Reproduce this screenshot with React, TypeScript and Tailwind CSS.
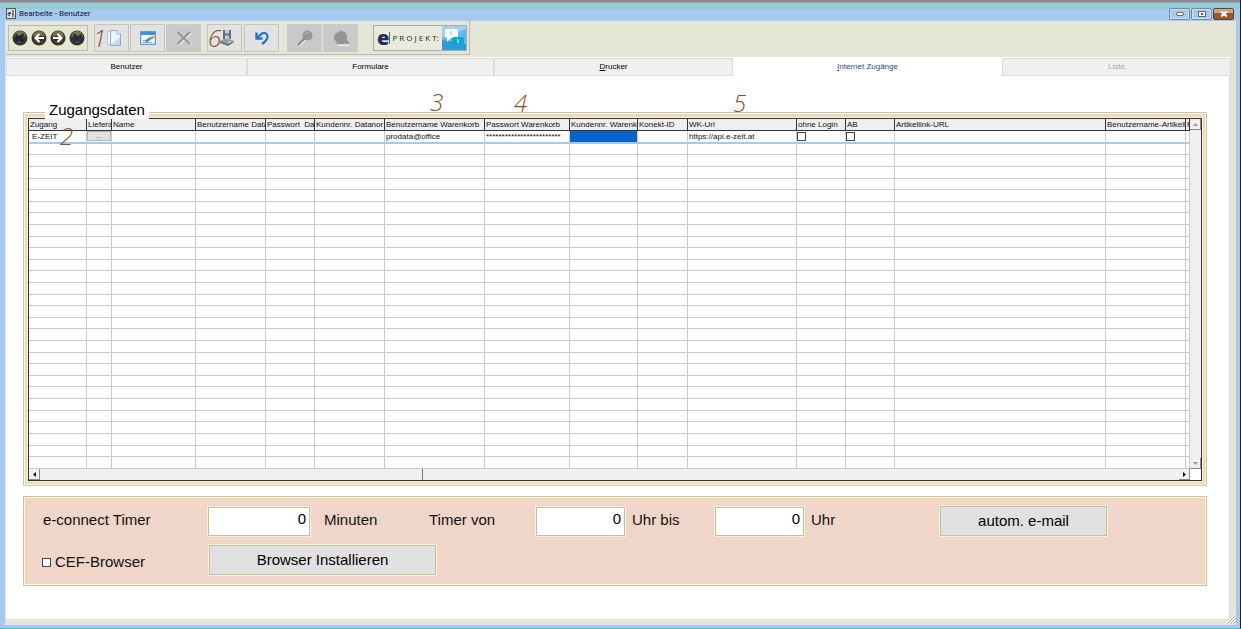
import { useState } from 'react';
import type { ReactNode } from 'react';

type Column = { label: string; width: string };

const TABS = [
  { label: 'Benutzer', grow: 'grow-[240]' },
  { label: 'Formulare', grow: 'grow-[246]' },
  { label: 'Drucker', grow: 'grow-[238]', hotkey: true },
  { label: 'Internet Zugänge', grow: 'grow-[270]', hotkey: true },
  { label: 'Liste', grow: 'grow-[228]', disabled: true },
];

// The URL column has no width, it takes what is left
const COLUMNS: Column[] = [
  { label: 'Zugang', width: 'w-[58px]' },
  { label: 'Liefera', width: 'w-[25px]' },
  { label: 'Name', width: 'w-[84px]' },
  { label: 'Benutzername Data', width: 'w-[70px]' },
  { label: 'Passwort  Da', width: 'w-[49px]' },
  { label: 'Kundennr. Datanor', width: 'w-[70px]' },
  { label: 'Benutzername Warenkorb', width: 'w-[100px]' },
  { label: 'Passwort Warenkorb', width: 'w-[85px]' },
  { label: 'Kundennr. Warenk', width: 'w-[68px]' },
  { label: 'Konekt-ID', width: 'w-[50px]' },
  { label: 'WK-Url', width: 'w-[109px]' },
  { label: 'ohne Login', width: 'w-[49px]' },
  { label: 'AB', width: 'w-[49px]' },
  { label: 'Artikellink-URL', width: '' },
  { label: 'Benutzername-Artikelli', width: 'w-[80px]' },
  { label: 'P', width: 'w-[4px]' },
];

const EMPTY_ROWS = 28;

function NavButton({ label, children }: { label: string; children: ReactNode }) {
  return (
    <button aria-label={label} className="h-4 w-4">
      <svg viewBox="0 0 16 16" className="h-4 w-4">
        <circle cx="8" cy="8" r="7.5" fill="#34342a" />
        <path d="M2 7a6 6 0 0 1 12 0c-3-2-9-2-12 0Z" fill="#77754a" />
        <path d="M2.500 10a6 5 0 0 0 11 0c-3 2-8 2-11 0Z" fill="#55532e" />
        {children}
      </svg>
    </button>
  );
}

function ToolButton({ label, off, children }: { label: string; off?: boolean; children: ReactNode }) {
  return (
    <button
      aria-label={label}
      disabled={off}
      className={`flex h-7 w-[35px] items-center justify-center border ${
        off ? 'border-[#cccccc] bg-[#c9c9c9]' : 'border-[#c3c3c8] bg-[#e2e2e2]'
      }`}
    >
      {children}
    </button>
  );
}

// Handwritten step number lying over the window
function Mark({ digit, place }: { digit: string; place: string }) {
  return (
    <span
      className={`pointer-events-none absolute z-10 font-['Open_Sans',sans-serif] text-2xl leading-6 font-light text-[#8a4f1c] italic ${place}`}
    >
      {digit}
    </span>
  );
}

function TitleBar() {
  return (
    <header className="flex h-[21px] items-end border-t-2 border-[#888888] bg-[#a5c9f1]">
      <div className="flex h-[19px] flex-1 items-center border-t border-[#8c9ed6] bg-linear-to-b from-[#98cccc] from-35% to-[#a5c9f1] to-35% pt-[3px] pr-1.5 pl-1.5">
        <svg viewBox="0 0 10 11" className="h-[11px] w-[10px]">
          <rect x="0.500" y="0.500" width="9" height="10" fill="#dcdcdc" stroke="#555" />
          <path d="M2 5.500h3a1.500 1.500 0 1 0-1 2M7 2v7" stroke="#333" fill="none" />
        </svg>
        <h1 className="pl-[3px] font-[Roboto,sans-serif] text-[8px] leading-3 whitespace-nowrap text-[#10182c]">
          Bearbeite - Benutzer
        </h1>
        <div className="ml-auto flex gap-px">
          <button
            aria-label="Minimieren"
            className="flex h-3 w-[21px] items-center justify-center rounded-xs border border-[#6f89ad] bg-[#a9cbe8] shadow-[inset_0_0_0_1px_#cfe2f5]"
          >
            <span className="h-[4px] w-2 rounded-xs border border-[#666666] bg-white" />
          </button>
          <button
            aria-label="Maximieren"
            className="flex h-3 w-[21px] items-center justify-center rounded-xs border border-[#6f89ad] bg-[#a9cbe8] shadow-[inset_0_0_0_1px_#cfe2f5]"
          >
            <svg viewBox="0 0 8 6" className="h-[6px] w-2">
              <rect x="0.500" y="0.500" width="7" height="5" fill="#fff" stroke="#666" />
              <rect x="3" y="2" width="2" height="2" fill="#555" />
            </svg>
          </button>
          <button
            aria-label="Schließen"
            className="flex h-3 w-[21px] items-center justify-center rounded-xs border border-[#5b4536] bg-linear-to-b from-[#c9a98a] from-45% to-[#9a5a26] to-45%"
          >
            <svg viewBox="0 0 8 6" className="h-[6px] w-2">
              <path d="M1 0.500l6 5M7 0.500l-6 5" stroke="#fff" strokeWidth="2" />
            </svg>
          </button>
        </div>
      </div>
    </header>
  );
}

function Toolbar() {
  return (
    <div className="flex h-[36px]">
      <div className="flex h-[34px] items-center border-r border-b border-[#b9b9c0] pr-0.5 pl-0.5">
        <div className="flex h-[26px] w-20 items-center justify-center gap-[3px] border border-[#b8b8b4]">
          <NavButton label="Erster">
            <path d="M4.500 4v8M11.500 4l-4.500 4 4.500 4" stroke="#16203c" strokeWidth="2" fill="none" />
          </NavButton>
          <NavButton label="Zurück">
            <path d="M8.500 4l-4 4 4 4M5 8h8" stroke="#fff" strokeWidth="2.200" fill="none" />
          </NavButton>
          <NavButton label="Weiter">
            <path d="M7.500 4l4 4-4 4M3 8h8" stroke="#fff" strokeWidth="2.200" fill="none" />
          </NavButton>
          <NavButton label="Letzter">
            <path d="M4.500 4l4.500 4-4.500 4M11.500 4v8" stroke="#1b2b58" strokeWidth="2" fill="none" />
          </NavButton>
        </div>

        <div className="ml-1.5 flex gap-px">
          <ToolButton label="Neu">
            <svg viewBox="0 0 14 18" className="ml-1 h-[18px] w-3.5">
              <path d="M0.500 2.500h7v13h-7z" fill="#f4f8fc" stroke="#b4c6da" />
              <path d="M3.500 1.500h6.500l3.500 3.500v11.500h-10z" fill="#eef4fb" stroke="#8fa9c8" />
              <path d="M10 1.500v3.500h3.500" fill="#fff" stroke="#8fa9c8" />
              <path d="M4 16l9-8v8z" fill="#c5d9ee" />
            </svg>
          </ToolButton>
          <ToolButton label="Bearbeiten">
            <svg viewBox="0 0 16 14" className="h-[14px] w-4">
              <rect x="0.700" y="0.700" width="14.600" height="12.600" fill="#f5f9fd" stroke="#3a87cc" />
              <path d="M1 1h14v3H1z" fill="#3f92da" />
              <path d="M3 9.500h3M3 11.500h9" stroke="#8aa6c4" />
              <path d="M5 11l1-2.500 5-3 1.500 2-5 3.500z" fill="#5f88b8" />
              <path d="M11 6l3-1.500 1 2-3 1.500z" fill="#d99a3c" />
            </svg>
          </ToolButton>
          <ToolButton label="Löschen" off>
            <svg viewBox="0 0 16 16" className="h-4 w-4">
              <path d="M2.500 2.500l13 12M15 3L3 15" stroke="#f0f0f0" strokeWidth="1.500" />
              <path d="M1.500 2l12.500 12M14 2l-12.500 12" stroke="#969696" strokeWidth="2.200" />
            </svg>
          </ToolButton>
        </div>

        <div className="ml-1.5 flex gap-0.5">
          <ToolButton label="Speichern">
            <svg viewBox="0 0 16 16" className="ml-1 h-4 w-4">
              <path d="M1 11l6-3 8 3-6 4z" fill="#9a9c9e" />
              <path d="M1 11v2l8 3v-2zM9 14v2l6-4v-1z" fill="#6d7072" />
              <path d="M4 0h8v9H4z" fill="#c4ccd4" />
              <path d="M5 0v9M11 0v9" stroke="#5f6e7c" strokeWidth="2" />
              <path d="M6 4.500h4" stroke="#5f6e7c" strokeWidth="2" />
              <path d="M9 12.500l3-1" stroke="#e8e8e8" />
            </svg>
          </ToolButton>
          <ToolButton label="Rückgängig">
            <svg viewBox="0 0 14 14" className="h-[14px] w-[14px]">
              <path d="M1.500 1.500v6h6" stroke="#1f74cf" strokeWidth="2.400" fill="none" />
              <path d="M2 7l5-4.500c3-1.500 6 .5 5.500 3.500C12 9 9.500 11.500 7 13" stroke="#1f74cf" strokeWidth="2.200" fill="none" />
            </svg>
          </ToolButton>
        </div>

        <div className="ml-2 flex gap-px">
          <ToolButton label="Suchen" off>
            <svg viewBox="0 0 16 16" className="h-4 w-4">
              <path d="M2.500 15.500l6-6" stroke="#efefef" strokeWidth="2" />
              <circle cx="10.500" cy="5.500" r="5" fill="#979797" />
              <path d="M7.500 8.500l-6.500 6.500" stroke="#8e8e8e" strokeWidth="2.400" />
              <path d="M8 4.500a3 3 0 0 1 4-1.500" stroke="#bdbdbd" fill="none" />
            </svg>
          </ToolButton>
          <ToolButton label="Filter" off>
            <svg viewBox="0 0 18 16" className="h-4 w-[18px]">
              <path d="M6 15h10l2-2-1 3H6z" fill="#f2f2f2" />
              <path d="M8 0l1 1 4 1 2 3v5l2 2v2h-2l-2-1-2 1H5l-1-3-2-1V6l2-3 3-1z" fill="#949494" />
            </svg>
          </ToolButton>
        </div>

        <button aria-label="e-Projekt" className="ml-[15px] flex h-[26px] items-center border border-[#aaaab0] bg-[#e9e9dc] pl-[3px]">
          <span className="font-['Open_Sans',sans-serif] text-xl leading-5 font-extrabold text-[#232b62]">e</span>
          <span className="h-3 w-px bg-[#2f7a6c]" />
          <span className="pl-0.5 font-['Open_Sans',sans-serif] text-[8px] leading-3 whitespace-nowrap text-[#22252e]">
            P R O J E K T:
          </span>
          <svg viewBox="0 0 24 24" className="ml-[3px] h-6 w-6">
            <rect width="24" height="24" fill="#64b8ea" />
            <path d="M0 14l24 4v6H0z" fill="#2b9bdc" />
            <path d="M0 0h24v3L0 12z" fill="#9dd4f4" />
            <path d="M5 3h9a2 2 0 0 1 2 2v5a2 2 0 0 1-2 2H9l-4 4v-4a2 2 0 0 1-2-2V5a2 2 0 0 1 2-2Z" fill="#fff" />
            <path d="M12 11h8a2 2 0 0 1 2 2v4a2 2 0 0 1-2 2v3l-3-3h-5a2 2 0 0 1-2-2v-4a2 2 0 0 1 2-2Z" fill="#0fa7cf" />
            <path d="M9 5v4M16 13v4" stroke="#9fd8f2" strokeWidth="1.500" />
          </svg>
        </button>
      </div>
    </div>
  );
}

function AccessTable() {
  const [noLogin, setNoLogin] = useState(false);
  const [ab, setAb] = useState(false);

  const cell = 'overflow-hidden border-r border-b-2 border-r-[#cbcbcb] border-b-[#a5c9f1] p-0 whitespace-nowrap';
  const box = 'block h-[9px] w-[9px] appearance-none border border-[#444444] bg-white checked:bg-[#333333]';

  return (
    <table className="h-full w-full table-fixed border-separate border-spacing-0 text-[8px] leading-[9px] text-[#111111]">
      <thead>
        <tr className="h-3">
          {COLUMNS.map((c) => (
            <th
              key={c.label}
              className={`overflow-hidden border-r border-b border-[#333333] bg-[#f0eff0] p-0 pl-px text-left font-normal whitespace-pre ${c.width}`}
            >
              {c.label}
            </th>
          ))}
        </tr>
      </thead>
      <tbody>
        <tr className="h-3">
          <td className={`${cell} pl-[3px]`}>E-ZEIT</td>
          <td className={cell}>
            <button
              aria-label="Lieferant wählen"
              className="block h-[10px] w-full border border-[#b4b4b4] bg-[#e1e1e1] text-center leading-[6px] text-[#777777]"
            >
              ...
            </button>
          </td>
          <td className={cell} />
          <td className={cell} />
          <td className={cell} />
          <td className={cell} />
          <td className={`${cell} pl-px`}>prodata@office</td>
          <td className={`${cell} pl-px`}>************************</td>
          <td className={`${cell} bg-[#0564cc]`} />
          <td className={cell} />
          <td className={`${cell} pl-px`}>https://api.e-zeit.at</td>
          <td className={cell}>
            <input type="checkbox" aria-label="ohne Login" checked={noLogin} onChange={(e) => setNoLogin(e.target.checked)} className={box} />
          </td>
          <td className={cell}>
            <input type="checkbox" aria-label="AB" checked={ab} onChange={(e) => setAb(e.target.checked)} className={box} />
          </td>
          <td className={cell} />
          <td className={cell} />
          <td className={cell} />
        </tr>
        {Array.from({ length: EMPTY_ROWS }, (_, row) => (
          <tr key={row} className="h-[11px]">
            {COLUMNS.map((c) => (
              <td key={c.label} className="border-r border-b border-[#cbcbcb] p-0" />
            ))}
          </tr>
        ))}
      </tbody>
    </table>
  );
}

function ScrollArrow({ label, d, dim }: { label: string; d: string; dim?: boolean }) {
  return (
    <button
      aria-label={label}
      className="flex h-[11px] w-[11px] shrink-0 items-center justify-center border-r border-b border-[#8a8a8a] bg-[#f0f0f0]"
    >
      <svg viewBox="0 0 5 5" className="h-[5px] w-[5px]">
        <path d={d} fill={dim ? '#9a9a9a' : '#111'} />
      </svg>
    </button>
  );
}

function AccessPanel() {
  return (
    <section className="relative flex min-h-0 flex-1 border border-[#c4c4c4] bg-[#fdf7c4] p-px">
      <h2 className="absolute -top-3 left-[21px] bg-white px-1 font-['Liberation_Sans',sans-serif] text-[15px] leading-[18px] text-black">
        Zugangsdaten
      </h2>
      <div className="flex min-h-0 flex-1 bg-[#f0d6c8] px-[3px] pt-1 pb-[3px]">
        <div className="flex min-h-0 flex-1 border border-[#333333] bg-white shadow-[0_0_0_1px_#fdf7c4]">
          <div className="flex min-h-0 min-w-0 flex-1 flex-col">
            <div className="min-h-0 flex-1">
              <AccessTable />
            </div>
            <div className="flex h-[11px] bg-[#f0f0f0]">
              <ScrollArrow label="Nach links" d="M4 0v5L1 2.500z" />
              <div className="w-[33%] border-r border-[#777777] bg-[#efefef]" />
              <div className="ml-auto">
                <ScrollArrow label="Nach rechts" d="M1 0v5l3-2.500z" />
              </div>
            </div>
          </div>
          <div className="flex w-[11px] flex-col justify-between bg-[#f0f0f0]">
            <ScrollArrow label="Nach oben" d="M0 4h5L2.500 1z" dim />
            <div className="border-b-[11px] border-white">
              <ScrollArrow label="Nach unten" d="M0 1h5L2.500 4z" dim />
            </div>
          </div>
        </div>
      </div>
    </section>
  );
}

function SettingsPanel() {
  const [minutes, setMinutes] = useState('0');
  const [from, setFrom] = useState('0');
  const [to, setTo] = useState('0');
  const [cef, setCef] = useState(false);

  const field =
    'h-[29px] border border-[#bdbdbd] bg-white pr-[3px] pb-1.5 text-right text-[15px] leading-5 text-black shadow-[0_0_0_1px_#fdf3bd]';
  const button = 'h-[30px] border border-[#bdbdbd] bg-[#e1e1e1] text-center text-black shadow-[0_0_0_1px_#fdf3bd]';

  return (
    <section className="border border-[#c6c69c] bg-[#f0d6c8] pt-2 pb-[9px] pl-[18px] text-[15px] leading-5 text-[#111111] shadow-[inset_0_0_0_1px_#fdf7c4]">
      <div className="flex h-[32px] items-center">
        <label htmlFor="minutes" className="w-[166px] pb-0.5 pl-px">e-connect Timer</label>
        <input id="minutes" value={minutes} onChange={(e) => setMinutes(e.target.value)} className={`${field} w-[102px]`} />
        <span className="w-[119px] pb-0.5 pl-3.5">Minuten</span>
        <label htmlFor="from" className="w-[107px] pb-0.5">Timer von</label>
        <input id="from" value={from} onChange={(e) => setFrom(e.target.value)} className={`${field} w-[89px]`} />
        <label htmlFor="to" className="w-[90px] pb-0.5 pl-[7px]">Uhr bis</label>
        <input id="to" value={to} onChange={(e) => setTo(e.target.value)} className={`${field} w-[89px]`} />
        <span className="w-[136px] pb-0.5 pl-[7px]">Uhr</span>
        <button className={`${button} w-[167px]`}>autom. e-mail</button>
      </div>
      <div className="mt-[7px] flex h-[32px] items-center">
        <label className="flex w-[167px] items-center gap-1 pt-1">
          <input
            type="checkbox"
            checked={cef}
            onChange={(e) => setCef(e.target.checked)}
            className="h-[9px] w-[9px] appearance-none border border-[#444444] bg-white checked:bg-[#444444]"
          />
          CEF-Browser
        </label>
        <button className={`${button} w-[227px]`}>Browser Installieren</button>
      </div>
    </section>
  );
}

export default function App() {
  const [active, setActive] = useState('Internet Zugänge');

  return (
    <div className="relative flex h-screen flex-col overflow-hidden border-r border-b border-r-[#222222] border-b-[#45bfd0] bg-[#a5c9f1] font-['Liberation_Sans',Arial,sans-serif]">
      <TitleBar />
      <div className="mr-1 mb-[3px] ml-[5px] flex min-h-0 flex-1 flex-col bg-[#e6e6d6] pr-[5px] pb-[5px] pl-px">
        <Toolbar />
        <nav role="tablist" className="flex h-[19px] shrink-0 items-end bg-white">
          {TABS.map((t) => (
            <button
              key={t.label}
              role="tab"
              aria-selected={active === t.label}
              disabled={t.disabled}
              onClick={() => setActive(t.label)}
              className={`basis-0 text-center text-[8px] leading-4 ${t.grow} ${
                active === t.label
                  ? 'h-[19px] bg-white text-[#1a4f8c]'
                  : 'h-[18px] border border-[#dcdcdc] bg-[#f0f0f0]'
              } ${t.disabled ? 'text-[#a8a8a8]' : ''}`}
            >
              {t.hotkey ? (
                <>
                  <span className="underline">{t.label[0]}</span>
                  {t.label.slice(1)}
                </>
              ) : (
                t.label
              )}
            </button>
          ))}
        </nav>
        <main className="flex min-h-0 flex-1 flex-col gap-2.5 border-r-2 border-b border-[#dedede] bg-white pt-9 pr-[22px] pb-[33px] pl-[17px]">
          <AccessPanel />
          <SettingsPanel />
        </main>
      </div>

      <svg viewBox="0 0 10 10" className="absolute right-1 bottom-1 h-2.5 w-2.5">
        <path d="M0 10L10 0M3 10l7-7M6 10l4-4" stroke="#fff" strokeWidth="1.500" />
        <path d="M1 10l9-9M4 10l6-6M7 10l3-3" stroke="#a9a9a0" />
      </svg>

      <Mark digit="1" place="top-[26px] left-[93px]" />
      <Mark digit="6" place="top-[26px] left-[208px]" />
      <Mark digit="2" place="top-[124px] left-[60px]" />
      <Mark digit="3" place="top-[90px] left-[430px]" />
      <Mark digit="4" place="top-[91px] left-[514px]" />
      <Mark digit="5" place="top-[91px] left-[733px]" />
    </div>
  );
}
